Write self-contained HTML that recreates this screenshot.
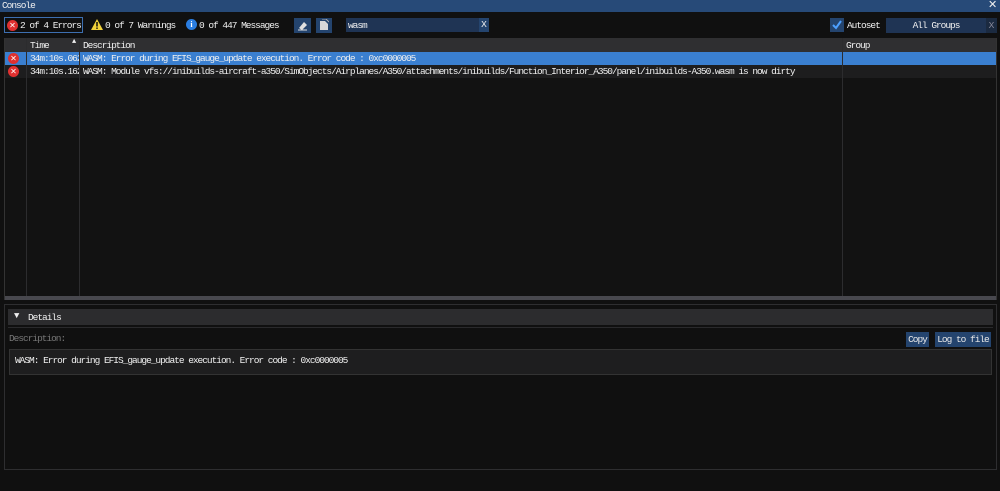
<!DOCTYPE html>
<html><head><style>
*{margin:0;padding:0;box-sizing:border-box}
body{width:1000px;height:491px;background:#101010;font-family:"Liberation Mono",monospace;font-size:9.5px;letter-spacing:-1.02px;color:#f0f0f0;position:relative;overflow:hidden}
.a{position:absolute;white-space:nowrap}
.t{line-height:13px}
.ico{position:absolute;width:11px;height:11px;border-radius:50%;background:#e03030;color:#fff;font-family:"Liberation Sans",sans-serif;font-size:8px;text-align:center;line-height:11px;letter-spacing:0}
.btn{position:absolute;background:#24446e;color:#e8e8e8;text-align:center;line-height:15px}
</style></head><body>
<div class="a" style="left:0;top:0;width:1000px;height:12px;background:#274a78"></div>
<div class="a t" style="left:2px;top:-1px;">Console</div>
<div class="a" style="left:988px;top:-2px;font-size:11px;font-family:'Liberation Sans';letter-spacing:0">✕</div>

<div class="a" style="left:4px;top:17px;width:79px;height:16px;border:1px solid #3d6fb0"></div>
<div class="ico" style="left:7px;top:20px">✕</div>
<div class="a t" style="left:20px;top:19px">2 of 4 Errors</div>
<svg class="a" style="left:91px;top:19px" width="12" height="11"><polygon points="6,0 12,11 0,11" fill="#f2d23a"/><rect x="5.3" y="3" width="1.4" height="4.5" fill="#000"/><rect x="5.3" y="8.5" width="1.4" height="1.4" fill="#000"/></svg>
<div class="a t" style="left:105px;top:19px">0 of 7 Warnings</div>
<div class="ico" style="left:186px;top:19px;background:#2a7de0;font-weight:bold;font-family:'Liberation Serif'">i</div>
<div class="a t" style="left:199px;top:19px">0 of 447 Messages</div>
<div class="btn" style="left:294px;top:18px;width:17px;height:15px"><svg width="11" height="11" style="margin-top:2px"><path d="M2 8 L7 2 L10 5 L5 10 Z" fill="#e0e0e0"/><path d="M1 10 H10" stroke="#e0e0e0"/></svg></div>
<div class="btn" style="left:316px;top:18px;width:16px;height:15px"><svg width="10" height="12" style="margin-top:1px"><path d="M1 2 H6 L9 5 V11 H1 Z" fill="#d8d8d8"/><path d="M3 0 H7 L10 3" stroke="#aaa" fill="none"/></svg></div>
<div class="a" style="left:346px;top:18px;width:143px;height:14px;background:#1f3454"></div>
<div class="a t" style="left:348px;top:19px">wasm</div>
<div class="a" style="left:479px;top:18px;width:10px;height:14px;background:#24446e;text-align:center;line-height:14px;letter-spacing:0">X</div>
<div class="a" style="left:830px;top:18px;width:14px;height:14px;background:#24446e"><svg width="14" height="14"><path d="M3 7 L6 10 L11 3" stroke="#4da0ff" stroke-width="2" fill="none"/></svg></div>
<div class="a t" style="left:847px;top:19px">Autoset</div>
<div class="a" style="left:886px;top:18px;width:100px;height:15px;background:#1f3454;text-align:center;line-height:15px">All Groups</div>
<div class="a" style="left:986px;top:18px;width:11px;height:15px;background:#1b2a40;color:#889;text-align:center;line-height:15px;letter-spacing:0">X</div>

<div class="a" style="left:4px;top:38px;width:993px;height:262px;border:1px solid #333;background:#121212"></div>
<div class="a" style="left:5px;top:38px;width:991px;height:14px;background:#2f2f31"></div>
<div class="a" style="left:5px;top:52px;width:991px;height:13px;background:#3a7fd0"></div>
<div class="a" style="left:5px;top:65px;width:991px;height:13px;background:#1d1d1e"></div>
<div class="a" style="left:26px;top:38px;width:1px;height:259px;background:#2c2c2e"></div>
<div class="a" style="left:79px;top:38px;width:1px;height:259px;background:#2c2c2e"></div>
<div class="a" style="left:842px;top:38px;width:1px;height:259px;background:#2c2c2e"></div>
<div class="a" style="left:5px;top:296px;width:991px;height:4px;background:#48484e"></div>
<div class="a t" style="left:30px;top:39px">Time</div>
<div class="a" style="left:72px;top:38px;font-size:7px;letter-spacing:0">▲</div>
<div class="a t" style="left:83px;top:39px">Description</div>
<div class="a t" style="left:846px;top:39px">Group</div>
<div class="ico" style="left:8px;top:53px">✕</div>
<div class="ico" style="left:8px;top:66px">✕</div>
<div class="a t" style="left:30px;top:52px;width:49px;overflow:hidden">34m:10s.062</div>
<div class="a t" style="left:30px;top:65px;width:49px;overflow:hidden">34m:10s.162</div>
<div class="a t" style="left:83px;top:52px">WASM: Error during EFIS_gauge_update execution. Error code : 0xc0000005</div>
<div class="a t" style="left:83px;top:65px">WASM: Module vfs://inibuilds-aircraft-a350/SimObjects/Airplanes/A350/attachments/inibuilds/Function_Interior_A350/panel/inibuilds-A350.wasm is now dirty</div>

<div class="a" style="left:4px;top:304px;width:993px;height:166px;border:1px solid #2e2e30"></div>
<div class="a" style="left:8px;top:309px;width:985px;height:16px;background:#2c2c2e"></div>
<div class="a" style="left:14px;top:311px;font-size:9px;letter-spacing:0">▼</div>
<div class="a t" style="left:28px;top:311px">Details</div>
<div class="a" style="left:8px;top:327px;width:985px;height:1px;background:#2a2a2c"></div>
<div class="a t" style="left:9px;top:332px;color:#777">Description:</div>
<div class="btn" style="left:906px;top:332px;width:23px;height:15px">Copy</div>
<div class="btn" style="left:935px;top:332px;width:56px;height:15px">Log to file</div>
<div class="a" style="left:9px;top:349px;width:983px;height:26px;background:#1e1e1f;border:1px solid #333"></div>
<div class="a t" style="left:15px;top:354px">WASM: Error during EFIS_gauge_update execution. Error code : 0xc0000005</div>
</body></html>
